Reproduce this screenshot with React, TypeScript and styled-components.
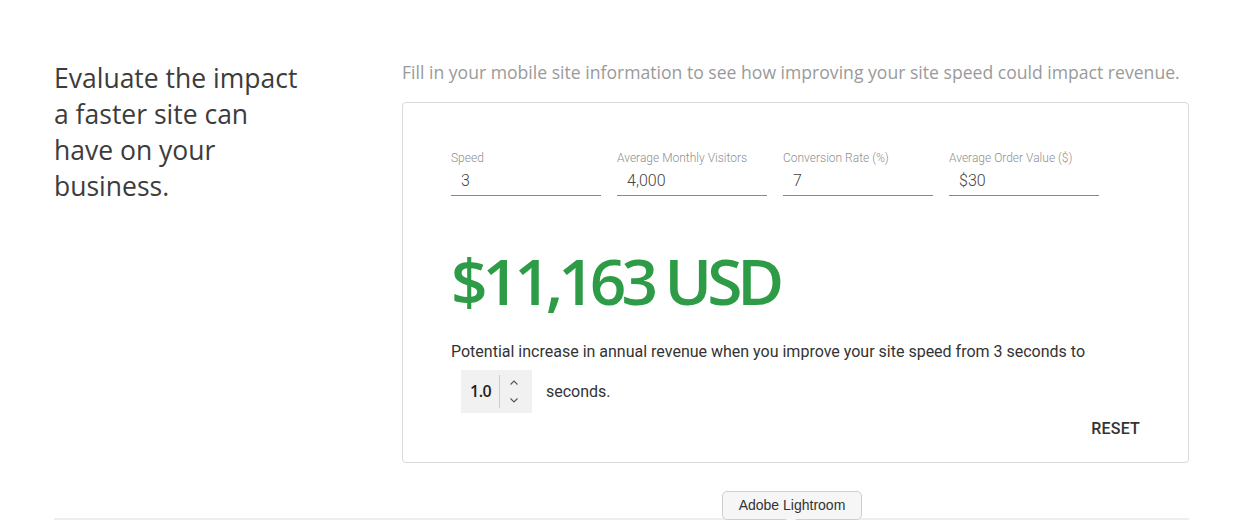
import styled, { createGlobalStyle } from "styled-components";

const GlobalStyle = createGlobalStyle`
    body {
        margin: 0;
        background: #fff;
        font-family: Roboto, "Liberation Sans", sans-serif;
    }
`

const Page = styled.div`
    position: relative;
    width: 1237px;
    height: 520px;
    overflow: hidden;
    padding: 60px 48px 0 54px;
    box-sizing: border-box;
`

const Section = styled.div`
    display: grid;
    grid-template-columns: 348px 1fr;
    padding-bottom: 55px;
    border-bottom: 2px solid #eeeeee;
`

const Heading = styled.h2`
    margin: 0;
    width: 256px;
    font-family: "Open Sans", sans-serif;
    font-weight: 400;
    font-size: 26.5px;
    line-height: 36px;
    color: #3c3c3c;
`

const Intro = styled.p`
    margin: 0 0 18px;
    font-family: "Open Sans", sans-serif;
    font-size: 17.6px;
    line-height: 24px;
    color: #9a9a9a;
    white-space: nowrap;
`

const Card = styled.div`
    border: 1px solid #dadada;
    border-radius: 4px;
    padding: 48px 48px 24px;
`

const Fields = styled.div`
    display: flex;
    gap: 16px;
`

const Field = styled.label`
    display: flex;
    flex-direction: column;
    width: 150px;
`

const Label = styled.span`
    font-size: 12px;
    font-weight: 300;
    line-height: 14px;
    color: #8f8f8f;
`

const Value = styled.span`
    padding: 6px 10px 4px;
    font-size: 16px;
    font-weight: 300;
    line-height: 20px;
    color: #444;
    border-bottom: 1px solid #8a8a8a;
`

const Amount = styled.div`
    margin: 45px 0 21px;
    font-family: "Open Sans", sans-serif;
    font-weight: 600;
    font-size: 64px;
    line-height: 80px;
    letter-spacing: -5px;
    color: #2e9c46;
`

const Text = styled.p`
    margin: 0;
    font-size: 16px;
    line-height: 20px;
    color: #333;
`

const StepperRow = styled.div`
    display: flex;
    align-items: center;
    gap: 14px;
    margin: 8px 0 0 10px;
`

const Stepper = styled.div`
    display: flex;
    align-items: center;
    height: 43px;
    width: 71px;
    background: #f1f1f1;
    box-sizing: border-box;
    padding-left: 9px;
`

const StepValue = styled.span`
    font-family: "Open Sans", sans-serif;
    font-weight: 600;
    font-size: 16px;
    letter-spacing: -0.5px;
    color: #222;
    padding-right: 8px;
    border-right: 1px solid #cccccc;
    line-height: 33px;
`

const Arrows = styled.div`
    display: flex;
    flex-direction: column;
    gap: 13px;
    padding-left: 10px;
`

const Footer = styled.div`
    display: flex;
    justify-content: flex-end;
    padding: 6px 0 0;
`

const ResetButton = styled.button`
    border: 0;
    background: none;
    padding: 0;
    font-family: Roboto, sans-serif;
    font-size: 16px;
    font-weight: 500;
    color: #333;
    letter-spacing: 0.2px;
`

const Tooltip = styled.div`
    position: absolute;
    left: 722px;
    top: 491px;
    width: 140px;
    box-sizing: border-box;
    text-align: center;
    padding: 4px 0 5px;
    background: #f6f6f6;
    border: 1px solid #cfcfcf;
    border-radius: 5px;
    font-family: "Liberation Sans", sans-serif;
    font-size: 14px;
    line-height: 18px;
    color: #333;

    &::after {
        content: "";
        position: absolute;
        left: 64px;
        bottom: -5px;
        width: 7px;
        height: 7px;
        background: #f6f6f6;
        border-right: 1px solid #cfcfcf;
        border-bottom: 1px solid #cfcfcf;
        transform: rotate(45deg);
    }
`

const Chevron = ({ up }: { up?: boolean }) => (
    <svg width="8" height="5" viewBox="0 0 8 5" style={{ display: "block" }}>
        <path
            d={up ? "M0.5 4.5 L4 1 L7.5 4.5" : "M0.5 0.5 L4 4 L7.5 0.5"}
            fill="none"
            stroke="#555"
            strokeWidth="1.1"
        />
    </svg>
)

export default function App() {
    const fields = [
        { label: "Speed", value: "3" },
        { label: "Average Monthly Visitors", value: "4,000" },
        { label: "Conversion Rate (%)", value: "7" },
        { label: "Average Order Value ($)", value: "$30" },
    ]
    return (
        <Page>
            <GlobalStyle />
            <Section>
                <Heading>Evaluate the impact a faster site can have on your business.</Heading>
                <div>
                    <Intro>Fill in your mobile site information to see how improving your site speed could impact revenue.</Intro>
                    <Card>
                        <Fields>
                            {fields.map(f => (
                                <Field key={f.label}>
                                    <Label>{f.label}</Label>
                                    <Value>{f.value}</Value>
                                </Field>
                            ))}
                        </Fields>
                        <Amount>$11,163 USD</Amount>
                        <Text>Potential increase in annual revenue when you improve your site speed from 3 seconds to</Text>
                        <StepperRow>
                            <Stepper>
                                <StepValue>1.0</StepValue>
                                <Arrows>
                                    <Chevron up />
                                    <Chevron />
                                </Arrows>
                            </Stepper>
                            <Text>seconds.</Text>
                        </StepperRow>
                        <Footer>
                            <ResetButton>RESET</ResetButton>
                        </Footer>
                    </Card>
                </div>
            </Section>
            <Tooltip>Adobe Lightroom</Tooltip>
        </Page>
    )
}
